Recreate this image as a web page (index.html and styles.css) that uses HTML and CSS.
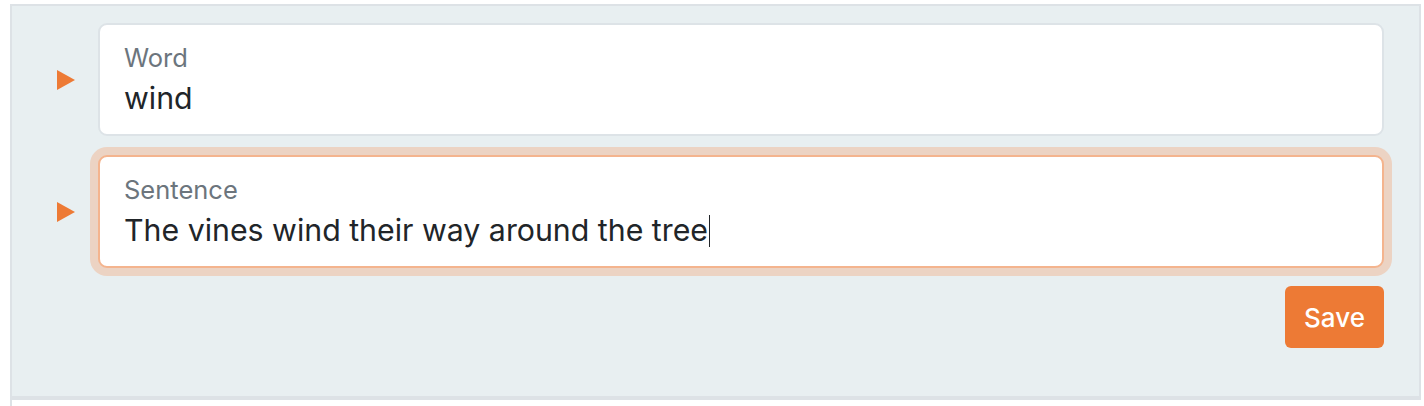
FILE: index.html
```html
<!DOCTYPE html>
<html lang="en">
<head>
<meta charset="utf-8">
<title>Word editor</title>
<link rel="stylesheet" href="styles.css">
</head>
<body>
<div class="panel">
  <div class="row">
    <span class="marker"></span>
    <div class="field">
      <div class="label">Word</div>
      <div class="value">wind</div>
    </div>
  </div>
  <div class="row">
    <span class="marker"></span>
    <div class="field focused">
      <div class="label">Sentence</div>
      <div class="value">The vines wind their way around the tree<span class="caret"></span></div>
    </div>
  </div>
  <div class="actions">
    <button class="save">Save</button>
  </div>
</div>
<div class="below"></div>
</body>
</html>
```

FILE: styles.css
```css
html, body {
  margin: 0;
  padding: 0;
  background: #ffffff;
  font-family: "Inter", "Noto Sans", "Liberation Sans", sans-serif;
}

.panel {
  margin: 4px 0 0 10px;
  width: 1411px;
  height: 396px;
  box-sizing: border-box;
  background: #e8eff1;
  border: 2px solid #dde2e6;
  border-bottom-width: 4px;
  padding: 17px 35px 48px 45px;
  display: flex;
  flex-direction: column;
  gap: 19px;
}

.row {
  display: flex;
  align-items: center;
  gap: 23px;
}

.marker {
  width: 0;
  height: 0;
  border-top: 10px solid transparent;
  border-bottom: 10px solid transparent;
  border-left: 18px solid #ed7a35;
  flex: none;
}

.field {
  flex: 1;
  background: #ffffff;
  border: 2px solid #dde3e7;
  border-radius: 9px;
  padding: 18px 24px 14px;
  height: 113px;
  box-sizing: border-box;
}

.field.focused {
  border-color: #f4b48e;
  box-shadow: 0 0 0 8px #ecd3c3;
}

.label {
  font-size: 25.5px;
  line-height: 30px;
  color: #6c757d;
}

.value {
  font-size: 30.3px;
  line-height: 38px;
  color: #212529;
  margin-top: 6px;
}

.caret {
  display: inline-block;
  width: 1.5px;
  height: 32px;
  background: #212529;
  vertical-align: -6px;
  margin-left: 1px;
}

.actions {
  display: flex;
  justify-content: flex-end;
  margin-top: -1px;
}

.save {
  width: 99px;
  height: 62px;
  background: #ed7a35;
  color: #ffffff;
  border: none;
  border-radius: 6px;
  font-family: inherit;
  font-size: 26px;
  font-weight: 500;
  padding: 0;
}

.below {
  margin-left: 10px;
  width: 2px;
  height: 10px;
  background: #dde2e6;
}
```
